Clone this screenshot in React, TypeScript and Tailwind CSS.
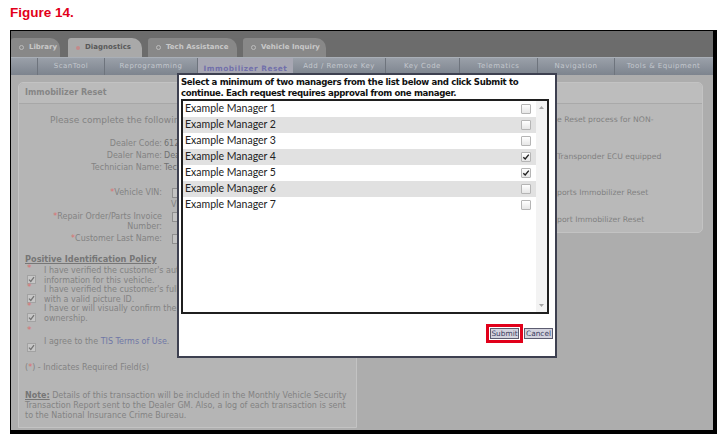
import React from "react";

const managers = [
  { name: "Example Manager 1", checked: false },
  { name: "Example Manager 2", checked: false },
  { name: "Example Manager 3", checked: false },
  { name: "Example Manager 4", checked: true },
  { name: "Example Manager 5", checked: true },
  { name: "Example Manager 6", checked: false },
  { name: "Example Manager 7", checked: false },
];

const subTabs = [
  { label: "", w: "w-[27px]" },
  { label: "ScanTool", w: "w-[67px]" },
  { label: "Reprogramming", w: "w-[93px]" },
  { label: "Immobilizer Reset", w: "w-[95px]", active: true },
  { label: "Add / Remove Key", w: "w-[93px]" },
  { label: "Key Code", w: "w-[74px]" },
  { label: "Telematics", w: "w-[78px]" },
  { label: "Navigation", w: "w-[77px]" },
  { label: "Tools & Equipment", w: "w-[97px]" },
];

const Tab = ({ label, className, active }: { label: string; className: string; active?: boolean }) => (
  <div
    className={`h-[19px] flex items-center gap-[5px] pl-[8px] rounded-tl-[3px] rounded-tr-[10px] text-[7px] font-bold ${
      active ? "bg-[#a9a9a9] text-[#595959]" : "bg-[#888888] text-[#c8c8c8]"
    } ${className}`}
  >
    {active ? (
      <span className="w-[4px] h-[4px] rounded-full bg-[#c48a8a]" />
    ) : (
      <span className="w-[5px] h-[5px] rounded-full border border-[#bdbdbd]" />
    )}
    <span>{label}</span>
  </div>
);

const SmallCheck = () => (
  <span className="w-[9px] h-[9px] border border-[#a2a2a2] bg-[#c6c6c6] flex items-center justify-center">
    <svg width="7" height="7" viewBox="0 0 7 7">
      <path d="M1 3.6 L2.8 5.4 L6 1.2" stroke="#747474" strokeWidth="1.3" fill="none" />
    </svg>
  </span>
);

const Policy = ({ lines, single }: { lines: React.ReactNode[]; single?: boolean }) => (
  <div className={`flex ${single ? "h-[26px] mt-[5px]" : "h-[19px]"}`}>
    <div className="w-[17px] shrink-0 flex flex-col items-start">
      <span className="h-[8px] leading-[10px] text-[9px] text-[#d87070]">*</span>
      <span className={single ? "mt-[10px]" : "mt-[4px]"}>
        <SmallCheck />
      </span>
    </div>
    <div className={`${single ? "pt-[12px]" : "pt-[3px]"} leading-[9.5px] whitespace-nowrap`}>
      {lines.map((l, i) => (
        <div key={i}>{l}</div>
      ))}
    </div>
  </div>
);

const FormRow = ({ label, value, input, req }: { label: React.ReactNode; value?: string; input?: boolean; req?: boolean }) => (
  <div className="flex items-start">
    <div className="w-[144px] shrink-0 text-right pr-[1px] whitespace-nowrap">
      {req && <span className="text-[#d87070]">*</span>}
      {label}
    </div>
    {value && <div className="pl-[1px] text-[#707070] whitespace-nowrap">{value}</div>}
    {input && <div className="ml-[9px] mt-[1px] w-[120px] h-[10px] shrink-0 border border-[#8e8e8e] bg-[#c2c2c2]" />}
  </div>
);

const LeftPanel = () => (
  <div className="w-[339px] flex flex-col border border-[#c3c3c3] rounded-t-[5px] bg-[#b5b5b5]">
    <div className="h-[21px] flex items-center pl-[6px] bg-[#bbbbbb] border-b border-[#a7a7a7] rounded-t-[5px] text-[8px] font-bold text-[#868686]">
      Immobilizer Reset
    </div>
    <div className="flex-1 text-[8px] text-[#838383]">
      <div className="mt-[10px] pl-[31px] text-[9px] leading-[12px] whitespace-nowrap">
        Please complete the following information.
      </div>
      <div className="mt-[12px] leading-[12px]">
        <FormRow label="Dealer Code:" value="61234" />
        <FormRow label="Dealer Name:" value="Dealer Name" />
        <FormRow label="Technician Name:" value="Technician" />
      </div>
      <div className="mt-[13px] leading-[12px]">
        <FormRow label="Vehicle VIN:" req input />
        <div className="pl-[152px] h-[12px]">VIN</div>
      </div>
      <div className="flex items-start leading-[10px] mt-[1px]">
        <div className="w-[144px] shrink-0 text-right pr-[1px] whitespace-nowrap">
          <span className="text-[#d87070]">*</span>Repair Order/Parts Invoice
          <br />
          Number:
        </div>
        <div className="ml-[9px] w-[120px] h-[10px] shrink-0 border border-[#8e8e8e] bg-[#c2c2c2]" />
      </div>
      <div className="leading-[12px] mt-[1px]">
        <FormRow label="Customer Last Name:" req input />
      </div>
      <div className="mt-[8px] pl-[6px] h-[10px] leading-[12px] font-bold underline text-[#767676] text-[8.2px] whitespace-nowrap">
        Positive Identification Policy
      </div>
      <div className="pl-[8px]">
        <Policy lines={["I have verified the customer's authorization", "information for this vehicle."]} />
        <Policy lines={["I have verified the customer's full name", "with a valid picture ID."]} />
        <Policy lines={["I have or will visually confirm the vehicle", "ownership."]} />
        <Policy
          single
          lines={[
            <span>
              I agree to the <span className="text-[#7077a6]">TIS Terms of Use</span>.
            </span>,
          ]}
        />
      </div>
      <div className="mt-[12px] pl-[6px] leading-[10px]">
        (<span className="text-[#d87070]">*</span>) - Indicates Required Field(s)
      </div>
      <div className="mt-[18px] pl-[6px] leading-[10px] whitespace-nowrap">
        <div>
          <span className="font-bold underline text-[#767676]">Note:</span> Details of this transaction will be included in the Monthly Vehicle Security
        </div>
        <div>Transaction Report sent to the Dealer GM. Also, a log of each transaction is sent</div>
        <div>to the National Insurance Crime Bureau.</div>
      </div>
    </div>
  </div>
);

// only the tail of each line shows to the right of the dialog
const CutLine = ({ shown, className }: { shown: string; className?: string }) => (
  <div className={`pl-[185px] whitespace-nowrap h-[11px] leading-[11px] ${className ?? ""}`}>{shown}</div>
);

const RightPanel = () => (
  <div className="w-[338px] h-[151px] flex flex-col border border-[#c3c3c3] rounded-[5px] bg-[#b9b9b9]">
    <div className="h-[21px] bg-[#bdbdbd] border-b border-[#a9a9a9] rounded-t-[5px]" />
    <div className="pl-[6px] pt-[10px] text-[7.7px] text-[#818181]">
      <CutLine shown="e Reset process for NON-" />
      <CutLine className="mt-[26px]" shown="Transponder ECU equipped" />
      <CutLine className="mt-[25px]" shown="ports Immobilizer Reset" />
      <CutLine className="mt-[16px]" shown="port Immobilizer Reset" />
    </div>
  </div>
);

const ListCheck = ({ checked }: { checked: boolean }) => (
  <span className="w-[10px] h-[10px] rounded-[1px] border border-[#b5b5b5] bg-gradient-to-b from-[#ffffff] to-[#e6e6e6] flex items-center justify-center">
    {checked && (
      <svg width="8" height="8" viewBox="0 0 8 8">
        <path d="M1.3 4.2 L3.2 6 L6.8 1.6" stroke="#222" strokeWidth="1.4" fill="none" />
      </svg>
    )}
  </span>
);

const Modal = () => (
  <div className="absolute left-[177px] top-[73px] w-[380px] h-[285px] bg-white border-2 border-[#3d4050] pl-[2px] pr-[2px]">
    <div className="pt-[2px] font-bold text-[8.6px] leading-[11px] tracking-[-0.35px] text-[#111] whitespace-nowrap">
      Select a minimum of two managers from the list below and click Submit to
      <br />
      continue. Each request requires approval from one manager.
    </div>
    <div className="mr-[4px] h-[215px] border-2 border-[#1f1f1f] flex">
      <div className="flex-1 flex flex-col">
        {managers.map((m, i) => (
          <div
            key={m.name}
            className={`h-[16px] flex items-center justify-between pl-[2px] pr-[5px] ${i % 2 === 1 ? "bg-[#e1e1e1]" : "bg-white"}`}
          >
            <span className="font-['Lato',sans-serif] text-[10.5px] text-[#222]">{m.name}</span>
            <ListCheck checked={m.checked} />
          </div>
        ))}
      </div>
      <div className="w-[11px] bg-[#f3f3f3] flex flex-col justify-between items-center py-[5px]">
        <svg width="5" height="3" viewBox="0 0 5 3">
          <path d="M0 3 L2.5 0 L5 3 Z" fill="#a5a5a5" />
        </svg>
        <svg width="5" height="3" viewBox="0 0 5 3">
          <path d="M0 0 L2.5 3 L5 0 Z" fill="#a5a5a5" />
        </svg>
      </div>
    </div>
    <div className="mt-[10px] flex justify-end items-center gap-[1px]">
      <div className="border-[3px] border-[#e1001a] p-[1px]">
        <button className="w-[29px] h-[11px] flex items-center justify-center bg-[#d3d3de] border border-[#5c5c70] text-[7.4px] leading-[9px] text-[#3b3b5e]">
          Submit
        </button>
      </div>
      <button className="w-[29px] h-[11px] flex items-center justify-center bg-[#d3d3de] border border-[#5c5c70] text-[7.4px] leading-[9px] text-[#3b3b5e]">
        Cancel
      </button>
    </div>
  </div>
);

export default function App() {
  return (
    <div className="relative w-[726px] h-[442px] bg-white overflow-hidden font-['DejaVu_Sans',sans-serif]">
      <div className="h-[30px] pl-[10px] pt-[5px] font-['Liberation_Sans',Arial,sans-serif] text-[13.5px] font-bold leading-[16px] text-[#e2001a]">
        Figure 14.
      </div>
      <div className="ml-[10px] w-[707px] h-[404px] flex flex-col border-t border-l border-black border-r-[4px] border-b-[4px] bg-[#adadad]">
        <div className="h-[26px] flex items-end bg-[#6c6c6c]">
          <Tab label="Library" className="w-[49px]" />
          <Tab label="Diagnostics" className="ml-[8px] w-[74px]" active />
          <Tab label="Tech Assistance" className="ml-[6px] w-[89px]" />
          <Tab label="Vehicle Inquiry" className="ml-[6px] w-[83px]" />
        </div>
        <div className="h-[18px] flex bg-gradient-to-b from-[#9aa0a9] to-[#7d848e] border-t border-[#a9afb7]">
          {subTabs.map((t, i) => (
            <div
              key={i}
              className={`${t.w} flex items-center justify-center tracking-[0.5px] whitespace-nowrap ${
                i < subTabs.length - 1 && !t.active ? "border-r border-[#6e747d]" : ""
              } ${t.active ? "bg-[#a7a7b3] text-[#7270ab] font-bold text-[7.4px] pt-[4px]" : "text-[7px] text-[#c3c7cd]"}`}
            >
              {t.label}
            </div>
          ))}
        </div>
        <div className="flex-1 flex gap-[8px] px-[7px] pt-[7px] pb-[2px] items-start">
          <div className="self-stretch flex">
            <LeftPanel />
          </div>
          <RightPanel />
        </div>
      </div>
      <Modal />
    </div>
  );
}
